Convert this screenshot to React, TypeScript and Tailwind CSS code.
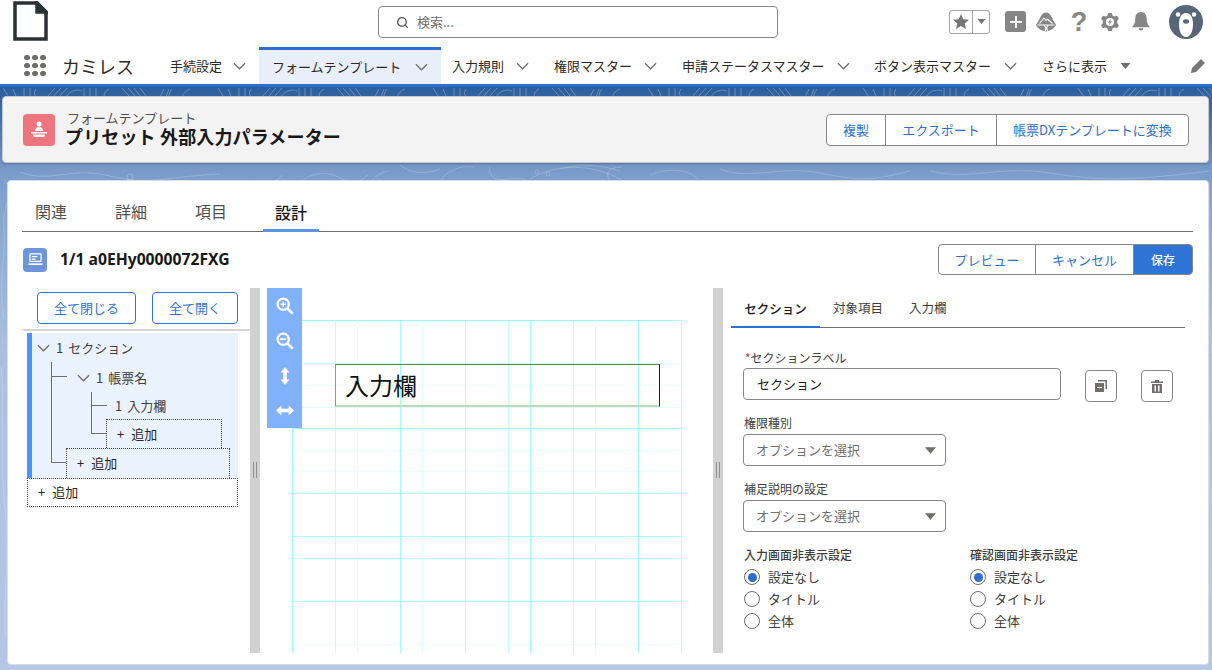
import React from "react";
import { Search } from "lucide-react";

function Chevron({ className = "" }: { className?: string }) {
  return (
    <svg viewBox="0 0 14 8" className={"w-[13px] h-[8px] shrink-0 " + className} fill="none" stroke="#706e6b" strokeWidth="1.4">
      <path d="M1 1l6 6 6-6" />
    </svg>
  );
}

function NavTab({ label, width, active, pad }: { label: string; width: string; active?: boolean; pad: string }) {
  return (
    <div className={`${width} ${pad} h-full flex items-center justify-between shrink-0 text-[13px] text-[#2b2826] ${active ? "bg-[#e8eff9] border-t-[3px] border-[#2e6fce] pl-[13px]" : "pl-[11px]"}`}>
      <span>{label}</span>
      <Chevron />
    </div>
  );
}

function Contours() {
  return (
    <svg className="absolute left-0 top-0 w-[1212px] h-[583px]" viewBox="0 0 1212 583" fill="none" stroke="#ffffff" strokeWidth="1" aria-hidden="true">
      <defs>
        <pattern id="strip" width="215" height="12" patternUnits="userSpaceOnUse">
          <path d="M3 1l6 9M13 2l3 7M24 1v9M30 1v9M36 2c-2 3-2 5 0 8M47 10l8-9M53 10l8-9M59 10l8-9M66 10c4-7 12-8 16-6M84 1v9M90 1v9M96 1v9M104 10c0-4 2-7 5-8M122 1l8 9M128 1l8 9M134 1l7 9M140 1l6 8M160 10l4-8M166 10l3-8M172 2c-2 2-3 5-3 8M182 10c2-4 4-7 8-8" />
        </pattern>
      </defs>
      <rect x="0" y="0" width="1212" height="10" fill="url(#strip)" stroke="none" opacity="0.28" />
      <g strokeOpacity="0.2">
        <path d="M300 95c10-8 25-12 40-4 12 6 20 4 28-3M270 94c6 0 10-2 12-6M370 96c4-6 10-10 18-12M400 78c10 8 24 10 40 4M440 94c8-10 18-16 34-14M490 80c-2 10 6 14 18 12s20 0 28 6" />
        <path d="M530 92c30-18 70-14 96 4M560 82c20-6 40-4 60 2M610 94c-6-8 0-14 12-14M650 88c20-8 40-6 50 6M20 85c30 12 50-6 90 4s60 0 110-2M720 82c30 12 60-4 100 4s50 8 90-2M930 84c40 10 70-6 120 2s80 8 160-2" />
        <circle cx="537" cy="85" r="2" />
        <circle cx="548" cy="87" r="2" />
        <circle cx="130" cy="90" r="3" />
        <path d="M4 92c12 14-2 24 0 50s-6 50 0 90M1 280c4 40-2 90 4 140s-2 80 0 130M1209 96c3 50-3 120 3 170M1210 330c-2 60 2 100 0 180" />
      </g>
    </svg>
  );
}

function GroupButton({ label, className = "" }: { label: string; className?: string }) {
  return (
    <div className={"h-full flex items-center justify-center text-[13px] text-[#2e6fce] " + className}>{label}</div>
  );
}

function AddBox({ className = "" }: { className?: string }) {
  return (
    <div className={"border border-dotted border-[#444] flex items-center pb-[1px] text-[13px] text-[#2b2826] [word-spacing:4px] " + className}>
      + 追加
    </div>
  );
}

function Select() {
  return (
    <div className="w-[203px] h-[32px] border border-[#8a8886] rounded-[4px] bg-white flex items-center justify-between pl-[12px] pr-[9px] text-[13px] text-[#706e6b]">
      <span>オプションを選択</span>
      <svg viewBox="0 0 12 7" className="w-[11px] h-[7px]"><path d="M0 0h12L6 7z" fill="#706e6b" /></svg>
    </div>
  );
}

function Radio({ label, checked }: { label: string; checked?: boolean }) {
  return (
    <div className="h-[22px] flex items-center gap-[8px] text-[13px] text-[#3e3e3c]">
      <span className="w-[16px] h-[16px] rounded-full border border-[#706e6b] bg-white flex items-center justify-center">
        {checked && <span className="w-[9px] h-[9px] rounded-full bg-[#2e6fce]" />}
      </span>
      <span>{label}</span>
    </div>
  );
}

function RadioGroup({ title }: { title: string }) {
  return (
    <div className="w-[226px]">
      <div className="text-[12px] font-medium text-[#3e3e3c] leading-[16px] mb-[3px]">{title}</div>
      <Radio label="設定なし" checked />
      <Radio label="タイトル" />
      <Radio label="全体" />
    </div>
  );
}

function Gutter() {
  return (
    <div className="w-[10px] shrink-0 bg-[#d1d1d1] flex items-center justify-center">
      <div className="w-[4px] h-[16px] border-x border-[#8f8f8f] relative -top-[1px]" />
    </div>
  );
}

const STRONG = "#9cffff";
const MID = "#bdffff";
const FAINT = "#dcffff";
const PALE = "#ecffff";

function Grid() {
  const v: [number, string][] = [[292, STRONG], [335, MID], [357, FAINT], [400, STRONG], [422, FAINT], [465, MID], [508, MID], [530, STRONG], [573, MID], [595, FAINT], [638, STRONG], [681, MID]];
  const h: [number, string][] = [[320, STRONG], [363, FAINT], [385, PALE], [407, FAINT], [428, STRONG], [450, PALE], [471, PALE], [493, MID], [536, "#b0ffff"], [558, "#ccffff"], [601, "#b8ffff"], [644, PALE]];
  return (
    <svg viewBox="292 320 391 333" className="absolute left-[32px] top-[32px] w-[391px] h-[333px]" aria-hidden="true" shapeRendering="crispEdges">
      {h.map(([y, c]) => <line key={y} x1="292" x2="682" y1={y + 0.5} y2={y + 0.5} stroke={c} />)}
      {v.map(([x, c]) => <line key={x} x1={x + 0.5} x2={x + 0.5} y1="320" y2="653" stroke={c} />)}
    </svg>
  );
}

function ToolIcons() {
  return (
    <div className="absolute left-[7px] top-0 w-[35px] h-[140px] bg-[#82b1fb] flex flex-col items-center pt-[9px] gap-[17px]">
      <svg viewBox="0 0 20 20" className="w-[18px] h-[18px]" fill="none" stroke="#fff" strokeWidth="2.4"><circle cx="8" cy="8" r="6.200" /><path d="M13 13l5.500 5.500" strokeWidth="3" /><path d="M5 8h6M8 5v6" strokeWidth="1.600" /></svg>
      <svg viewBox="0 0 20 20" className="w-[18px] h-[18px]" fill="none" stroke="#fff" strokeWidth="2.4"><circle cx="8" cy="8" r="6.200" /><path d="M13 13l5.500 5.500" strokeWidth="3" /><path d="M4.500 8h7" strokeWidth="2" /></svg>
      <svg viewBox="0 0 12 20" className="w-[12px] h-[18px]" fill="#fff"><path d="M6 0l5 6H8v8h3l-5 6-5-6h3V6H1z" /></svg>
      <svg viewBox="0 0 20 12" className="w-[18px] h-[11px] mt-[3px]" fill="#fff"><path d="M0 6l6-5.500v3.500h8V.5L20 6l-6 5.500V8H6v3.500z" /></svg>
    </div>
  );
}

function TreeLine({ className }: { className: string }) {
  return <span className={"absolute bg-[#706e6b] " + className} />;
}

const treeRow = "flex items-center gap-[6px] text-[13px] text-[#3e3e3c] [word-spacing:2px]";

export default function App() {
  return (
    <div className="w-[1212px] h-[670px] overflow-hidden flex flex-col bg-white font-['Noto_Sans_CJK_JP','Noto_Sans',sans-serif]">
      <header className="h-[47px] shrink-0 flex items-center pl-[13px] pr-[9px]">
        <svg viewBox="0 0 35 40" className="w-[35px] h-[40px] shrink-0 -mt-[6px]" fill="#fff" stroke="#2b3236" strokeWidth="3.500">
          <path d="M2 2h22l9 9v27H2z" />
          <path d="M24 2l9 9h-9z" fill="#2b3236" />
        </svg>
        <div className="ml-[330px] w-[400px] h-[32px] border border-[#8a8886] rounded-[4px] flex items-center pl-[17px] gap-[8px] text-[13px] text-[#706e6b] -mt-[3px]">
          <Search size={13} strokeWidth={2.6} color="#5c5c5c" />
          <span>検索...</span>
        </div>
        <div className="ml-auto flex items-center -mt-[4px]">
          <div className="w-[41px] h-[24px] border border-[#a5a5a5] rounded-[3px] flex">
            <div className="w-[23px] flex items-center justify-center border-r border-[#a5a5a5]">
              <svg viewBox="0 0 16 15" className="w-[16px] h-[15px]"><path d="M8 0l2.300 5.300 5.700.5-4.300 3.800 1.300 5.400L8 11.900 3 14.999l1.300-5.400L0 5.800l5.700-.5z" fill="#767676" /></svg>
            </div>
            <div className="flex-1 flex items-center justify-center">
              <svg viewBox="0 0 10 6" className="w-[9px] h-[5px]"><path d="M0 0h10L5 6z" fill="#767676" /></svg>
            </div>
          </div>
          <div className="ml-[15px] w-[21px] h-[21px] rounded-[3px] bg-[#868686] flex items-center justify-center">
            <svg viewBox="0 0 12 12" className="w-[12px] h-[12px]"><path d="M5 0h2v5h5v2H7v5H5V7H0V5h5z" fill="#fff" /></svg>
          </div>
          <svg viewBox="0 0 20 20" className="ml-[10px] w-[20px] h-[20px]">
            <path d="M10 .5c2.500 0 4 1.500 5.500 4.500S18.500 11 20 12.500c-.5 3-6 7-10 7s-9.500-4-10-7C1.500 11 3 8 4.500 5S7.500.5 10 .5z" fill="#868686" />
            <path d="M3.500 11.500L8 6l2 2.500 1.500-1.500 5 4.500M1.500 13h17M8 13l2 3-1 3.500M12 13l-1.500 3 1.500 3.500" stroke="#fff" strokeWidth="1.100" fill="none" />
          </svg>
          <span className="ml-[14px] w-[18px] text-center text-[27px] leading-[24px] font-bold text-[#868686] font-['Liberation_Sans',sans-serif]">?</span>
          <svg viewBox="0 0 20 20" className="ml-[13px] w-[18px] h-[18px]">
            <path d="M8 0h4l1 3 2 1 3-1 2 3.500-2 2v3l2 2-2 3.500-3-1-2 1-1 3H8l-1-3-2-1-3 1-2-3.500 2-2v-3l-2-2L2 3l3 1 2-1z" fill="#868686" />
            <circle cx="10" cy="10" r="4.500" fill="#fff" />
            <path d="M11 6.500L7.800 10.500h2L9 13.500l3.200-4h-2z" fill="#868686" />
          </svg>
          <svg viewBox="0 0 20 20" className="ml-[12px] w-[20px] h-[19px]">
            <path d="M10 0c4 0 6 3 6 7 0 4 1 6 3 8v1H1v-1c2-2 3-4 3-8 0-4 2-7 6-7zM7.500 17h5a2.500 2.500 0 0 1-5 0z" fill="#868686" />
          </svg>
          <svg viewBox="0 0 34 34" className="ml-[18px] w-[34px] h-[34px]">
            <circle cx="17" cy="17" r="17" fill="#566577" />
            <circle cx="9" cy="9.500" r="2.200" fill="#fff" />
            <circle cx="25" cy="9.500" r="2.200" fill="#fff" />
            <path d="M17 8c4.500 0 7 4.500 7 11 0 7-2.500 13-7 13s-7-6-7-13c0-6.500 2.500-11 7-11z" fill="#fff" />
            <ellipse cx="17" cy="16.500" rx="3" ry="2.200" fill="#566577" />
          </svg>
        </div>
      </header>

      <nav className="h-[37px] shrink-0 flex items-center">
        <div className="ml-[24px] w-[22px] grid grid-cols-3 gap-[2.5px] shrink-0">
          {Array.from({ length: 9 }).map((_, i) => (
            <span key={i} className="w-[5.5px] h-[5.5px] rounded-full bg-[#706e6b]" />
          ))}
        </div>
        <div className="ml-[16px] w-[108px] text-[18px] text-[#2b2826] shrink-0 leading-none">カミレス</div>
        <div className="w-[89px] h-full flex items-center justify-between shrink-0 text-[13px] text-[#2b2826] pr-[13px]">
          <span>手続設定</span>
          <Chevron />
        </div>
        <NavTab label="フォームテンプレート" width="w-[182px]" pad="pr-[13px]" active />
        <NavTab label="入力規則" width="w-[102px]" pad="pr-[14px]" />
        <NavTab label="権限マスター" width="w-[128px]" pad="pr-[14px]" />
        <NavTab label="申請ステータスマスター" width="w-[192px]" pad="pr-[13px]" />
        <NavTab label="ボタン表示マスター" width="w-[168px]" pad="pr-[14px]" />
        <div className="pl-[11px] h-full flex items-center text-[13px] text-[#2b2826] gap-[13px]">
          <span>さらに表示</span>
          <svg viewBox="0 0 10 6" className="w-[11px] h-[6px]"><path d="M0 0h10L5 6z" fill="#706e6b" /></svg>
        </div>
        <svg viewBox="0 0 14 14" className="ml-auto mr-[7px] w-[14px] h-[14px]"><path d="M10 0l4 4-9 9-5 1 1-5z" fill="#767676" /></svg>
      </nav>

      <main className="flex-1 min-h-0 relative border-t-[3px] border-[#2e6fce] bg-[linear-gradient(180deg,#2b5d9c_0%,#7b9dcb_15%,#aac0de_45%,#b5c7e2_100%)] flex flex-col">
        <Contours />
        <section className="relative mt-[9px] ml-[2px] w-[1207px] h-[67px] shrink-0 bg-[#f3f3f3] border border-[#c9c9c9] rounded-[4px] flex items-center pl-[20px] pr-[19px] shadow-[0_1px_2px_rgba(0,0,0,0.2)]">
          <div className="w-[32px] h-[32px] rounded-[4px] bg-[#ee7580] flex items-center justify-center shrink-0">
            <svg viewBox="0 0 20 20" className="w-[20px] h-[20px]" fill="#fff">
              <circle cx="10" cy="4" r="2.500" />
              <path d="M6 11c0-2.500 1.500-4 4-4s4 1.500 4 4z" />
              <path d="M2 12h16v1.500H2zM4 14.500h12L15 17H5z" />
            </svg>
          </div>
          <div className="ml-[12px] -mt-[1px]">
            <div className="text-[13px] leading-[14px] text-[#514f4d]">フォームテンプレート</div>
            <div className="text-[18px] leading-[22px] font-bold text-[#181818] -ml-[2px] tracking-[0.15px]">プリセット 外部入力パラメーター</div>
          </div>
          <div className="ml-auto h-[32px] border border-[#8a8886] rounded-[4px] bg-white flex divide-x divide-[#8a8886]">
            <GroupButton label="複製" className="w-[59px]" />
            <GroupButton label="エクスポート" className="w-[111px]" />
            <GroupButton label="帳票DXテンプレートに変換" className="w-[191px]" />
          </div>
        </section>

        <section className="relative mt-[17px] ml-[7px] w-[1202px] h-[485px] shrink-0 bg-white rounded-[4px] border border-[#d8dde6] pl-[14px] pr-[15px] flex flex-col">
          <div className="h-[51px] pl-[1px] shrink-0 border-b border-[#706e6b] flex items-end text-[16px] leading-[24px] text-[#514f4d]">
            <div className="w-[80px] pl-[12px] h-[37px] pt-[5px]">関連</div>
            <div className="w-[80px] pl-[12px] h-[37px] pt-[5px]">詳細</div>
            <div className="w-[80px] pl-[12px] h-[37px] pt-[5px]">項目</div>
            <div className="w-[56px] h-[37px] pt-[5px] text-center font-medium text-[#181818] border-b-[3px] border-[#5b94e8] -mb-[1px]">設計</div>
          </div>
          <div className="h-[31px] mt-[12px] pl-[1px] shrink-0 flex items-center">
            <div className="w-[24px] h-[24px] rounded-[4px] bg-[#6d95dc] flex items-center justify-center">
              <svg viewBox="0 0 16 14" className="w-[15px] h-[13px]" fill="none" stroke="#fff" strokeWidth="1.300">
                <rect x="2" y="1" width="12" height="8" rx="0.5" />
                <path d="M4 4h6M4 6.500h4" />
                <path d="M.5 12h15" strokeWidth="1.800" />
              </svg>
            </div>
            <div className="ml-[13px] mt-[1px] text-[15.7px] font-bold text-[#181818] font-['Noto_Sans',sans-serif]">1/1 a0EHy0000072FXG</div>
            <div className="ml-auto h-[31px] flex border border-[#8a8886] rounded-[4px] overflow-hidden">
              <GroupButton label="プレビュー" className="w-[97px] border-r border-[#8a8886]" />
              <GroupButton label="キャンセル" className="w-[98px] border-r border-[#8a8886]" />
              <div className="w-[58px] bg-[#2e74d6] text-white text-[12px] font-medium flex items-center justify-center">保存</div>
            </div>
          </div>
          <div className="h-[365px] mt-[13px] shrink-0 flex">
            <div className="w-[228px] shrink-0 pt-[4px]">
              <div className="flex pl-[15px] gap-[16px]">
                <button className="w-[99px] h-[32px] border border-[#2e74d6] rounded-[4px] text-[13px] text-[#2e74d6]">全て閉じる</button>
                <button className="w-[86px] h-[32px] border border-[#2e74d6] rounded-[4px] text-[13px] text-[#2e74d6]">全て開く</button>
              </div>
              <div className="h-[2px] ml-[1px] bg-[#d4d4d4] mt-[5px]" />
              <div className="ml-[5px] w-[211px] mt-[2px] relative">
                <div className="h-[145px] bg-[#eaf2fd] border-l-[5px] border-[#4a94fb] relative">
                  <TreeLine className="left-[19px] top-[29px] w-px h-[100px]" />
                  <TreeLine className="left-[19px] top-[43px] h-px w-[16px]" />
                  <TreeLine className="left-[19px] top-[129px] h-px w-[15px]" />
                  <TreeLine className="left-[59px] top-[59px] w-px h-[41px]" />
                  <TreeLine className="left-[59px] top-[72px] h-px w-[16px]" />
                  <TreeLine className="left-[59px] top-[100px] h-px w-[15px]" />
                  <div className={"h-[30px] pl-[5px] " + treeRow}><Chevron /><span>1 セクション</span></div>
                  <div className={"h-[30px] pl-[45px] " + treeRow}><Chevron /><span>1 帳票名</span></div>
                  <div className={"h-[26px] pl-[83px] " + treeRow}>1 入力欄</div>
                  <AddBox className="ml-[74px] w-[116px] h-[29px] pl-[10px] border-b-0" />
                  <AddBox className="ml-[34px] w-[164px] h-[30px] pl-[10px] border-b-0" />
                </div>
                <AddBox className="w-[211px] h-[29px] pl-[10px]" />
              </div>
            </div>
            <Gutter />
            <div className="w-[453px] shrink-0 relative overflow-hidden">
              <Grid />
              <div className="absolute left-[75px] top-[76px] w-[325px] h-[43px] border-t border-t-[#4a8a4a] border-l border-l-[#8a9a8a] border-r border-r-[#222] border-b-[2px] border-b-[#bdd9bd] flex items-center pl-[9px] text-[24px] text-[#111]">入力欄</div>
              <ToolIcons />
            </div>
            <Gutter />
            <div className="flex-1 min-w-0 pl-[8px] text-[#3e3e3c]">
              <div className="w-[454px] h-[40px] border-b border-[#706e6b] flex items-end text-[12.5px]">
                <div className="w-[89px] h-[28px] -mb-[1px] text-center font-medium text-[#181818] border-b-[2px] border-[#2e6fce]">セクション</div>
                <div className="ml-[13px] w-[52px] h-[28px]">対象項目</div>
                <div className="ml-[24px] h-[28px]">入力欄</div>
              </div>
              <div className="pl-[12px]">
                <label className="block mt-[22px] ml-[2px] text-[12px] leading-[16px]"><span className="text-[#c23934]">*</span>セクションラベル</label>
                <div className="flex mt-[2px]">
                  <div className="w-[318px] h-[32px] border border-[#8a8886] rounded-[4px] flex items-center pl-[13px] text-[13px] text-[#181818]">セクション</div>
                  <button className="ml-[24px] mt-[2px] w-[32px] h-[32px] border border-[#8a8886] rounded-[4px] flex items-center justify-center">
                    <svg viewBox="0 0 12 12" className="w-[12px] h-[12px]" fill="#706e6b"><path d="M3 0h9v9h-1.500V1.500H3z" /><path d="M0 3h9v9H0z" /><path d="M2 7.500h5" stroke="#fff" /></svg>
                  </button>
                  <button className="ml-[24px] mt-[2px] w-[32px] h-[32px] border border-[#8a8886] rounded-[4px] flex items-center justify-center">
                    <svg viewBox="0 0 12 13" className="w-[12px] h-[13px]" fill="#706e6b"><path d="M4 0h4v1.500h4V3H0V1.500h4z" /><path d="M1 4h10v9H1zM3.500 5.500v6h1.500v-6zM7 5.500v6h1.500v-6z" fillRule="evenodd" /></svg>
                  </button>
                </div>
                <label className="block mt-[13px] ml-[1px] text-[12px] leading-[16px]">権限種別</label>
                <div className="mt-[3px]"><Select /></div>
                <label className="block mt-[15px] ml-[1px] text-[12px] leading-[16px]">補足説明の設定</label>
                <div className="mt-[3px]"><Select /></div>
                <div className="mt-[15px] ml-[1px] flex gap-[0px]">
                  <div className="w-[226px]"><RadioGroup title="入力画面非表示設定" /></div>
                  <RadioGroup title="確認画面非表示設定" />
                </div>
              </div>
            </div>
          </div>
        </section>
      </main>
    </div>
  );
}
